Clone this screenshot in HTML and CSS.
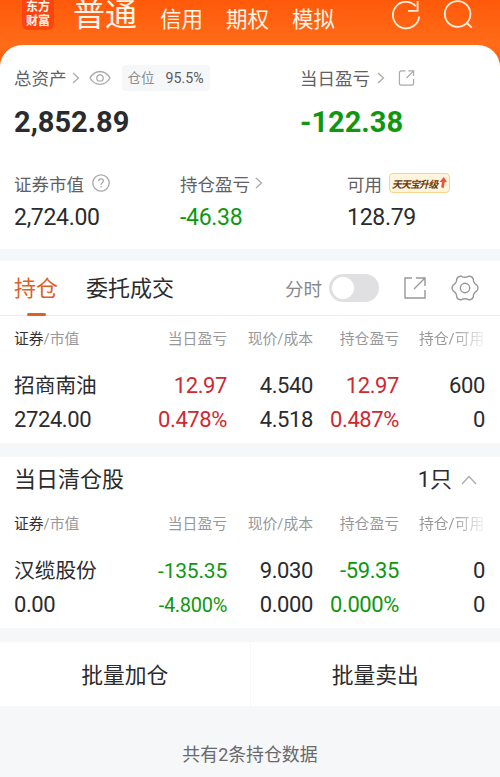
FILE: index.html
```html
<!DOCTYPE html>
<html lang="zh-CN">
<head>
  <meta charset="UTF-8" />
  <meta name="viewport" content="width=device-width, initial-scale=1" />
  <title>持仓</title>
  <link rel="stylesheet" href="styles.css">
</head>
<body>
  <header class="topbar">
    <div class="logo"><span>东方</span><span>财富</span></div>
    <nav class="accounts">
      <a class="current">普通</a>
      <a>信用</a>
      <a>期权</a>
      <a>模拟</a>
    </nav>
    <div class="top-icons">
      <svg width="32" height="32" viewBox="0 0 32 32">
        <path d="M29.2 16.500A13.200 13.200 0 1 1 25.800 6.200"/>
        <path d="M27.600 1v9.800H18"/>
      </svg>
      <svg width="32" height="32" viewBox="0 0 32 32">
        <circle cx="14.600" cy="14" r="12.800"/>
        <path d="M23.800 23l5 4.600"/>
      </svg>
    </div>
  </header>

  <section class="summary">
    <div class="totals">
      <div class="total">
        <div class="label">总资产
          <svg class="chevron" width="8" height="12" viewBox="0 0 8 12"><path d="M1 1l5.500 5L1 11"/></svg>
          <svg class="eye" width="22" height="16" viewBox="0 0 22 16"><path d="M1 8C3.300 4 6.500 1.500 11 1.500S18.700 4 21 8c-2.300 4-5.500 6.300-10 6.300S3.300 12 1 8z"/><circle cx="11" cy="8" r="3.200"/></svg>
          <span class="ratio"><i>仓位</i>95.5%</span>
        </div>
        <div class="big">2,852.89</div>
      </div>
      <div class="total">
        <div class="label">当日盈亏
          <svg class="chevron wide" width="8" height="12" viewBox="0 0 8 12"><path d="M1 1l5.500 5L1 11"/></svg>
          <svg class="share" width="18" height="18" viewBox="0 0 18 18"><path d="M8 1.500H3.500a2 2 0 0 0-2 2v11a2 2 0 0 0 2 2h11a2 2 0 0 0 2-2V10M11 1.500h5.500V7M16.500 1.500L9 9"/></svg>
        </div>
        <div class="big down">-122.38</div>
      </div>
    </div>
    <div class="stats">
      <div class="stat">
        <div class="label">证券市值
          <svg class="help" width="18" height="18" viewBox="0 0 18 18"><circle cx="9" cy="9" r="8.200"/><path d="M6.700 7.200c0-3.100 4.700-3.100 4.700-.2 0 1.700-2.300 1.700-2.300 3.700M9.100 12v1.400"/></svg>
        </div>
        <div class="num">2,724.00</div>
      </div>
      <div class="stat">
        <div class="label">持仓盈亏
          <svg class="chevron" width="8" height="12" viewBox="0 0 8 12"><path d="M1 1l5.500 5L1 11"/></svg>
        </div>
        <div class="num down">-46.38</div>
      </div>
      <div class="stat">
        <div class="label">可用
          <span class="promo"><em>天天宝升级</em>
            <svg width="8" height="12" viewBox="0 0 8 12"><path d="M4.800 0L8 5H5.800L4.500 11.500 2.200 10 3 5H.5z" fill="#f0503c"/></svg>
          </span>
        </div>
        <div class="num">128.79</div>
      </div>
    </div>
  </section>

  <section class="panel holdings">
    <div class="tabs">
      <a class="tab active">持仓</a>
      <a class="tab">委托成交</a>
      <div class="tools">
        <span class="tool-label">分时</span>
        <span class="switch"></span>
        <svg class="export" width="24" height="24" viewBox="0 0 24 24"><path d="M9 2H2v20h20v-8M13 2h9v8M22 2L11 13"/></svg>
        <svg class="gear" width="28" height="26" viewBox="0 0 28 26"><path d="M17.600 1.300Q21 .9 22.300 4.100Q22.200 8.200 25.900 10.200Q28 13 25.900 15.800Q22.200 17.800 22.300 21.900Q21 25.100 17.600 24.700Q14 22.800 10.400 24.700Q7 25.100 5.700 21.900Q5.800 17.800 2.100 15.800Q0 13 2.100 10.200Q5.800 8.200 5.700 4.100Q7 .9 10.400 1.300Q14 3.200 17.600 1.300Z"/><circle cx="14" cy="13" r="4.700"/></svg>
      </div>
    </div>
    <div class="row head">
      <span><b>证券</b>/市值</span><span>当日盈亏</span><span>现价/成本</span><span>持仓盈亏</span><span class="fade">持仓/可用</span>
    </div>
    <div class="row">
      <span class="name">招商南油</span><span class="up">12.97</span><span>4.540</span><span class="up">12.97</span><span>600</span>
    </div>
    <div class="row">
      <span>2724.00</span><span class="up">0.478%</span><span>4.518</span><span class="up">0.487%</span><span>0</span>
    </div>
  </section>

  <section class="panel closed">
    <div class="closed-title">
      <h2>当日清仓股</h2>
      <span class="count">1只</span>
      <svg width="16" height="10" viewBox="0 0 16 10"><path d="M1 9l7-7.500L15 9"/></svg>
    </div>
    <div class="row head">
      <span><b>证券</b>/市值</span><span>当日盈亏</span><span>现价/成本</span><span>持仓盈亏</span><span class="fade">持仓/可用</span>
    </div>
    <div class="row">
      <span class="name">汉缆股份</span><span class="down small">-135.35</span><span>9.030</span><span class="down">-59.35</span><span>0</span>
    </div>
    <div class="row">
      <span>0.00</span><span class="down smaller">-4.800%</span><span>0.000</span><span class="down">0.000%</span><span>0</span>
    </div>
  </section>

  <div class="actions">
    <a>批量加仓</a>
    <a>批量卖出</a>
  </div>
  <footer>共有2条持仓数据</footer>
</body>
</html>
```
FILE: styles.css
```css
* {
  box-sizing: border-box;
}
body {
  margin: 0;
  height: 777px;
  overflow: hidden;
  background: #f6f7f9;
  color: #2b2b2d;
  font-family: Roboto, "Noto Sans CJK SC", sans-serif;
}
svg {
  fill: none;
  stroke: #aaa;
  stroke-width: 1.3;
  flex: none;
}
.down {
  color: #0f980f;
}
.up {
  color: #cf2930;
}

/* Orange top bar */
.topbar {
  height: 67px;
  display: flex;
  align-items: flex-start;
  padding: 0 26px 0 22px;
  background: linear-gradient(#ff5a0a, #ff6c18 45px, #fb5c0c);
  color: #fff5e8;
}
.logo {
  width: 32px;
  height: 30px;
  padding-top: 0;
  border-radius: 0 0 6px 6px;
  background: #fa4510;
  display: flex;
  flex-direction: column;
  align-items: center;
  font-size: 12px;
  font-weight: 700;
  line-height: 14px;
}
.accounts {
  display: flex;
  margin-left: 19px;
}
.accounts a {
  font-size: 21.5px;
  line-height: 40px;
  margin-right: 23px;
}
.accounts .current {
  font-size: 32px;
  line-height: 31px;
}
.top-icons {
  display: flex;
  gap: 21px;
  margin-left: auto;
  margin-right: -1px;
}
.top-icons svg {
  stroke: #fff0e2;
  stroke-width: 1.8;
}

/* Asset summary */
.summary {
  height: 204px;
  margin-top: -22px;
  padding: 20px 14px 0;
  border-radius: 22px 22px 0 0;
  background: #fff;
}
.label {
  display: flex;
  align-items: center;
  height: 26px;
  padding-bottom: 1px;
  font-size: 17.5px;
  color: #616163;
}
.totals {
  display: grid;
  grid-template-columns: 286px 1fr;
}
.big {
  margin-top: 12px;
  font-size: 29px;
  font-weight: 700;
  line-height: 38px;
}
.chevron {
  margin-left: 5px;
}
.chevron.wide {
  margin-left: 7px;
}
.eye {
  margin-left: 9px;
}
.ratio {
  height: 26px;
  margin-left: 11px;
  padding: 0 6px;
  border-radius: 4px;
  background: #f6f7f9;
  font-size: 14.2px;
  line-height: 26px;
  color: #5b5b5e;
}
.ratio i {
  margin-right: 11px;
  font-size: 13.5px;
  font-style: normal;
  color: #8d8d90;
}
.share {
  width: 17px;
  margin-left: 13px;
}
.stats {
  display: grid;
  grid-template-columns: 166px 167px 1fr;
  margin-top: 30px;
}
.stats .label {
  padding-bottom: 2px;
}
.help {
  margin-left: 8px;
}
.num {
  margin-top: 6px;
  font-size: 23px;
  line-height: 30px;
  letter-spacing: -0.3px;
}
.promo {
  display: flex;
  align-items: center;
  justify-content: center;
  width: 61px;
  height: 20px;
  margin-left: 7px;
  border: 1px solid #f7d58c;
  border-radius: 4px;
  background: #fff5dc;
}
.promo em {
  font-size: 10px;
  font-weight: 700;
  letter-spacing: -0.9px;
  color: #6b3a14;
}
.promo svg {
  margin-left: 2px;
  stroke: none;
}

/* Panels */
.panel {
  background: #fff;
}
.holdings {
  height: 182px;
  margin-top: 12px;
}
.tabs {
  display: flex;
  height: 55px;
  padding: 0 21px 0 14px;
  border-bottom: 1px solid #ededf0;
}
.tab {
  position: relative;
  margin-right: 28px;
  font-size: 22px;
  line-height: 56px;
}
.tab.active {
  color: #e0601f;
}
.tab.active::after {
  content: "";
  position: absolute;
  left: 13px;
  bottom: -1px;
  width: 19px;
  height: 3px;
  border-radius: 2px;
  background: #e0601f;
}
.tools {
  display: flex;
  align-items: center;
  margin-left: auto;
}
.tools svg {
  stroke: #98989b;
  stroke-width: 1.4;
}
.tool-label {
  font-size: 18.5px;
  color: #88888b;
}
.switch {
  width: 50px;
  height: 28px;
  margin: 0 23px 0 7px;
  padding: 3px;
  border-radius: 14px;
  background: #e0e0e3;
}
.switch::before {
  content: "";
  display: block;
  width: 22px;
  height: 22px;
  border-radius: 50%;
  background: #fff;
}
.gear {
  margin-left: 24px;
}
.export {
  margin-left: 1px;
}

/* Position tables */
.row {
  display: grid;
  grid-template-columns: 127px 86px 86px 86px 86px;
  padding-left: 14px;
  font-size: 22px;
  line-height: 34px;
  letter-spacing: -0.4px;
  text-align: right;
  white-space: nowrap;
}
.row span:first-child {
  text-align: left;
}
.row .name {
  font-size: 20.7px;
  letter-spacing: 0;
}
.row .small {
  font-size: 21px;
  letter-spacing: -0.2px;
}
.row .smaller {
  font-size: 20px;
  letter-spacing: -0.3px;
}
.row.head {
  margin-bottom: 8px;
  font-size: 14.8px;
  line-height: 44px;
  letter-spacing: 0;
  color: #98989b;
}
.holdings .head {
  padding-top: 1px;
}
.row.head b {
  font-weight: 400;
  color: #303033;
}
.row.head .fade {
  margin-left: 20px;
  overflow: hidden;
  text-align: left;
  -webkit-mask-image: linear-gradient(90deg, #000 50%, transparent 105%);
  mask-image: linear-gradient(90deg, #000 50%, transparent 105%);
}

.closed {
  height: 171px;
  margin-top: 14px;
}
.closed-title {
  display: flex;
  align-items: center;
  height: 45px;
  padding: 0 23px 0 14px;
}
.closed-title h2 {
  margin: 0;
  font-size: 22px;
  font-weight: 400;
  line-height: 45px;
}
.count {
  margin-left: auto;
  margin-right: 9px;
  font-size: 22px;
  line-height: 45px;
}

.actions {
  display: flex;
  height: 64px;
  margin-top: 14px;
  background: #fff;
}
.actions a {
  flex: 1;
  font-size: 21.8px;
  line-height: 68px;
  text-align: center;
}
.actions a + a {
  border-left: 1px solid #f8f8fa;
}
footer {
  padding-top: 33px;
  font-size: 17.9px;
  line-height: 32px;
  text-align: center;
  color: #69696c;
}
```
